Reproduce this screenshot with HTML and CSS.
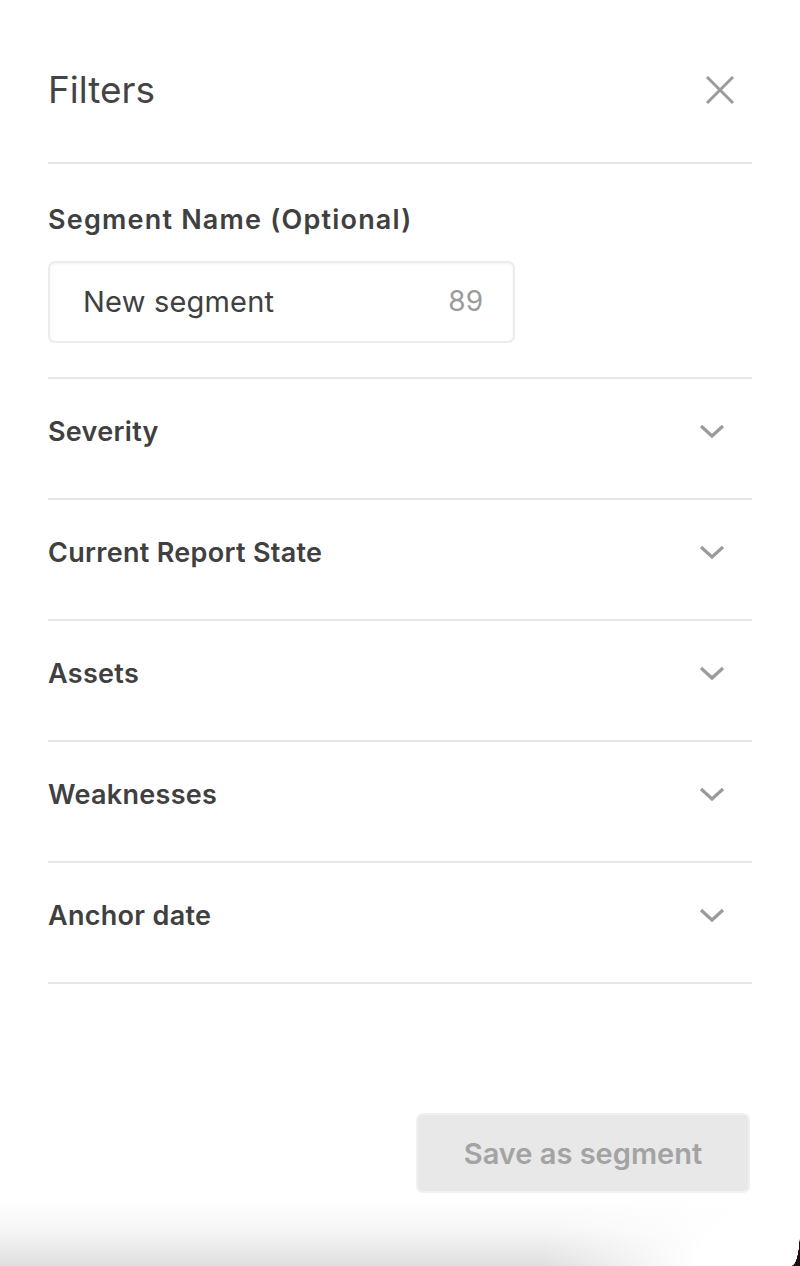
FILE: index.html
```html
<!DOCTYPE html>
<html lang="en">
<head>
<meta charset="utf-8">
<title>Filters</title>
<link rel="stylesheet" href="styles.css">
</head>
<body>
<div class="sheet">
  <div class="content">
    <header class="header">
      <h1 class="title">Filters</h1>
      <button class="close" aria-label="Close">
        <svg width="30" height="30" viewBox="0 0 30 30"><path d="M2 2 L28 28 M28 2 L2 28" stroke="#9b9b9b" stroke-width="3" fill="none"/></svg>
      </button>
    </header>

    <section class="segment">
      <label class="label">Segment Name (Optional)</label>
      <div class="input">
        <span class="input-text">New segment</span>
        <span class="counter">89</span>
      </div>
    </section>

    <div class="row"><span class="row-label">Severity</span><svg class="chev" width="26" height="16" viewBox="0 0 26 16"><path d="M2 3 L13 13 L24 3" stroke="#9b9b9b" stroke-width="3.2" fill="none"/></svg></div>
    <div class="row"><span class="row-label">Current Report State</span><svg class="chev" width="26" height="16" viewBox="0 0 26 16"><path d="M2 3 L13 13 L24 3" stroke="#9b9b9b" stroke-width="3.2" fill="none"/></svg></div>
    <div class="row"><span class="row-label">Assets</span><svg class="chev" width="26" height="16" viewBox="0 0 26 16"><path d="M2 3 L13 13 L24 3" stroke="#9b9b9b" stroke-width="3.2" fill="none"/></svg></div>
    <div class="row"><span class="row-label">Weaknesses</span><svg class="chev" width="26" height="16" viewBox="0 0 26 16"><path d="M2 3 L13 13 L24 3" stroke="#9b9b9b" stroke-width="3.2" fill="none"/></svg></div>
    <div class="row"><span class="row-label">Anchor date</span><svg class="chev" width="26" height="16" viewBox="0 0 26 16"><path d="M2 3 L13 13 L24 3" stroke="#9b9b9b" stroke-width="3.2" fill="none"/></svg></div>

    <div class="footer">
      <button class="save" disabled>Save as segment</button>
    </div>
  </div>
  <div class="shade"></div>
</div>
</body>
</html>
```

FILE: styles.css
```css
* { box-sizing: border-box; }
html, body { margin: 0; padding: 0; }
body {
  background: #1c0e0e;
  font-family: "Inter", "Open Sans", sans-serif;
  color: #404040;
}
.sheet {
  background: #fff;
  height: 1266px;
  display: flex;
  flex-direction: column;
  position: relative;
}
.content {
  padding: 0 48px;
}
.header {
  height: 164px;
  padding-top: 18px;
  display: flex;
  align-items: center;
  justify-content: space-between;
  border-bottom: 2px solid #e6e6e6;
}
.title {
  margin: 0;
  font-size: 37px;
  font-weight: 400;
  line-height: 44px;
  color: #444;
}
.close {
  border: 0;
  background: none;
  padding: 0;
  margin-right: 17px;
  width: 30px;
  height: 30px;
  display: flex;
}
.segment {
  padding-top: 39px;
  padding-bottom: 34px;
  border-bottom: 2px solid #e6e6e6;
}
.label {
  display: block;
  font-size: 27px;
  font-weight: 600;
  line-height: 34px;
  letter-spacing: 1.2px;
  color: #404040;
}
.input {
  margin-top: 24px;
  width: 467px;
  height: 82px;
  border: 2px solid #ececec;
  border-radius: 7px;
  box-shadow: inset 0 1px 3px rgba(0,0,0,0.05);
  display: flex;
  align-items: center;
  justify-content: space-between;
  padding: 0 30px 2px 33px;
}
.input-text {
  font-size: 29px;
  letter-spacing: 0.2px;
  color: #404040;
}
.counter {
  font-size: 28px;
  color: #9b9b9b;
}
.row {
  height: 121px;
  padding-bottom: 15px;
  border-bottom: 2px solid #e6e6e6;
  display: flex;
  align-items: center;
  justify-content: space-between;
}
.row-label {
  font-size: 27px;
  font-weight: 600;
  letter-spacing: 0.3px;
  color: #404040;
}
.chev {
  margin-right: 27px;
}
.footer {
  display: flex;
  justify-content: flex-end;
  padding-top: 129px;
}
.save {
  width: 334px;
  height: 80px;
  margin-right: 2px;
  border: 2px solid #f0f0f0;
  border-radius: 7px;
  background: #e8e8e8;
  color: #a3a3a3;
  font-family: inherit;
  font-size: 29px;
  font-weight: 600;
}
.shade {
  flex: 1;
  margin-top: 7px;
  position: relative;
  background:
    radial-gradient(ellipse 260px 140px at 100% 100%, #fff 40%, rgba(255,255,255,0) 100%),
    linear-gradient(to bottom, #fff 0%, #f6f6f6 45%, #dfdfdf 100%);
}
.shade::after {
  content: "";
  position: absolute;
  right: 0;
  bottom: 0;
  width: 8px;
  height: 36px;
  background: radial-gradient(ellipse 8px 36px at 0 0, rgba(0,0,0,0) 97%, #1c0e0e 100%);
}
```
